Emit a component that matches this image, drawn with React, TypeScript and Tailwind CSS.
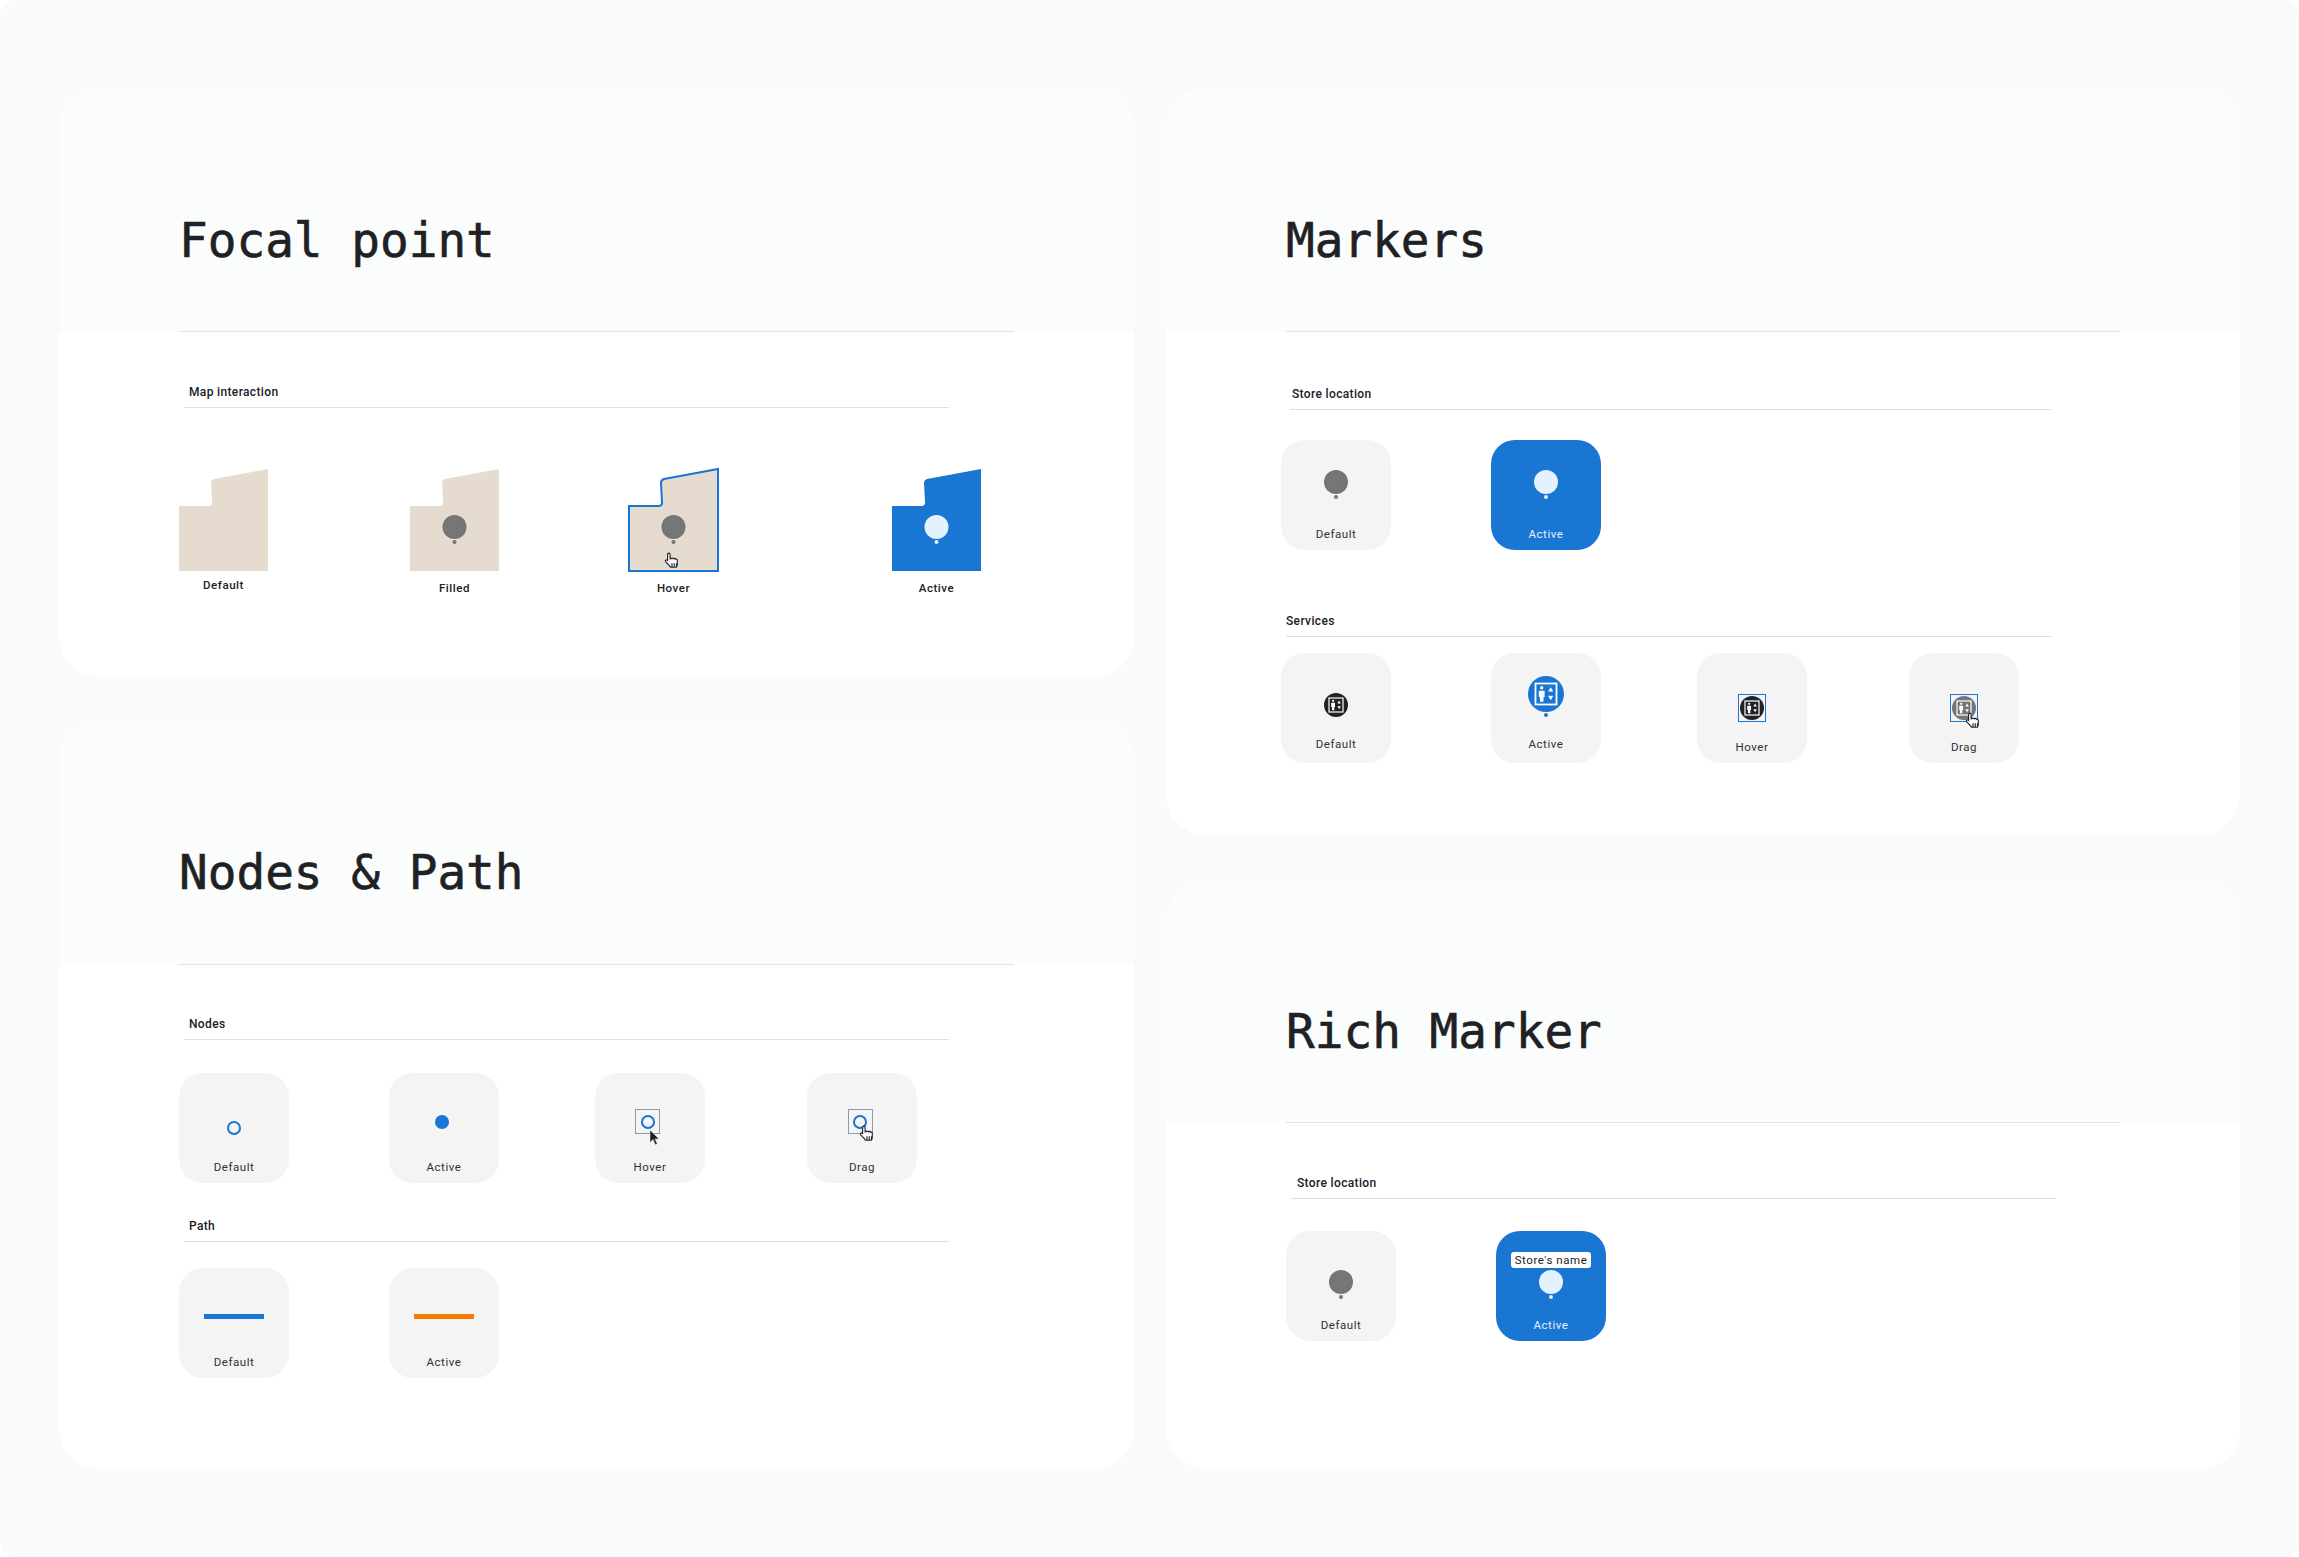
import React from 'react';

const BLUE = '#1976d2';

const specks = [
  [8, 6], [12, 5], [16, 6], [6, 10], [10, 9], [14, 9], [18, 10], [5, 14], [9, 13], [13, 13], [17, 14], [8, 17], [12, 17], [16, 18], [11, 20],
];

const Marker = ({ active = false }: { active?: boolean }) => {
  const fill = active ? '#e3f2fd' : '#757575';
  return (
    <svg width="24" height="30" viewBox="0 0 24 30" className="block">
      <circle cx="12" cy="12" r="12" fill={fill} />
      <circle cx="12" cy="27" r="2" fill={fill} />
      {!active && specks.map(([x, y]) => <circle key={`${x}-${y}`} cx={x} cy={y} r="0.35" fill="#bdbdbd" />)}
    </svg>
  );
};

const Elevator = ({ fill, dot = false, size = 24 }: { fill: string; dot?: boolean; size?: number }) => (
  <svg width={size} height={dot ? size + 8 : size} viewBox={dot ? '0 0 36 44' : '0 0 36 36'} className="block">
    <circle cx="18" cy="18" r="18" fill={fill} />
    <rect x="7.5" y="7.5" width="21" height="21" fill="none" stroke="white" strokeWidth="1.8" />
    <circle cx="13.7" cy="11.8" r="1.7" fill="white" />
    <path d="M10.8 14.8h5.8v6.2h-1.1v4.8h-3.6v-4.8h-1.1z" fill="white" />
    <path d="M22.7 11.2l2.6 4.4h-5.2zM20.1 19.8h5.2l-2.6 4.4z" fill="white" />
    {dot && <circle cx="18" cy="39" r="2" fill={fill} />}
  </svg>
);

const HandCursor = ({ size = 18 }: { size?: number }) => (
  <svg width={size} height={size} viewBox="0 0 16 16" className="block overflow-visible">
    <path
      d="M5.2 1c.7 0 1.1.5 1.1 1.2v3.9l.9-.1c.2-.5.6-.7 1-.6.4 0 .7.2.9.6.3-.3.7-.4 1.1-.3.4.1.6.3.8.7.4-.2.8-.2 1.2.1.4.3.5.7.5 1.2v3c0 1.1-.3 2-.8 2.8H6.7c-.4-.7-1-1.3-1.9-2.3L2.4 8.7c-.4-.5-.4-1 0-1.4.4-.4 1-.4 1.5 0l.2.2V2.2c0-.7.4-1.2 1.1-1.2z"
      fill="white"
      stroke="#202124"
      strokeWidth="1"
    />
    <path d="M8 10v3.4M10 10v3.4M12 10v3.4" stroke="#202124" strokeWidth="1" />
  </svg>
);

const ArrowCursor = () => (
  <svg width="12" height="17" viewBox="0 0 12 17" className="block">
    <path d="M1 0v12.5l3-3 2.3 5.2 2-.9L6 9h4z" fill="#202124" stroke="#e8e8e8" strokeWidth="0.5" />
  </svg>
);

const Ring = () => <div className="w-[14px] h-[14px] rounded-full border-[2.5px] border-[#1976d2]" />;

const Card = ({ title, headerHeight, titlePad, height, children }: { title: string; headerHeight: string; titlePad: string; height: string; children: React.ReactNode }) => (
  <div className={`bg-white rounded-[40px] overflow-hidden ${height}`}>
    <div className={`bg-[#fbfdfc] px-[120px] ${headerHeight}`}>
      <div className={`h-full w-[835px] border-b border-[#dfe1e3] ${titlePad}`}>
        <h1 className="font-['DejaVu_Sans_Mono',monospace] text-[47.7px] leading-[56px] text-[#202124] [-webkit-text-stroke:0.6px_#202124]">{title}</h1>
      </div>
    </div>
    {children}
  </div>
);

const SectionTitle = ({ label, className }: { label: string; className: string }) => (
  <div className={`w-[765px] border-b-[1.5px] border-[#e0e0e0] pb-[7px] font-['Roboto',sans-serif] text-[12px] leading-[16px] font-medium tracking-[0.35px] text-[#202124] ${className}`}>
    {label}
  </div>
);

const Tile = ({ label, top, bottom = 'mb-[9px]', active = false, className = '', children }: { label: string; top: string; bottom?: string; active?: boolean; className?: string; children: React.ReactNode }) => (
  <div className={`w-[110px] h-[110px] shrink-0 rounded-[24px] flex flex-col items-center ${active ? 'bg-[#1976d2]' : 'bg-[#f4f4f4]'} ${top} ${className}`}>
    {children}
    <div className={`mt-auto font-['Roboto',sans-serif] text-[11.5px] leading-[14px] tracking-[0.55px] ${active ? 'text-[#e3f2fd]' : 'text-[#303134]'} ${bottom}`}>{label}</div>
  </div>
);

const MapShape = ({ fill, outline = false, marker, activeMarker = false, label, labelGap = 'mt-[10px]', hand = false, className = '' }: { fill: string; outline?: boolean; marker?: boolean; activeMarker?: boolean; label: string; labelGap?: string; hand?: boolean; className?: string }) => (
  <div className={`w-[89px] shrink-0 flex flex-col items-center ${className}`}>
    <div className="relative w-[89px] h-[102px]">
      <svg width="89" height="102" viewBox="0 0 89 102" className="block overflow-visible">
        <path
          d="M0 37H29.5Q33.5 37 33 33L32 14Q32 11 35 10L89 0V102H0Z"
          fill={fill}
          stroke={outline ? BLUE : 'none'}
          strokeWidth={outline ? 2 : 0}
        />
        {marker && (
          <g transform="translate(32.5 46)">
            <circle cx="12" cy="12" r="12" fill={activeMarker ? '#e3f2fd' : '#757575'} />
            <circle cx="12" cy="27" r="2" fill={activeMarker ? '#e3f2fd' : '#757575'} />
            {!activeMarker && specks.map(([x, y]) => <circle key={`${x}-${y}`} cx={x} cy={y} r="0.35" fill="#bdbdbd" />)}
          </g>
        )}
      </svg>
      {hand && (
        <div className="absolute left-[34px] top-[83px]">
          <HandCursor size={18} />
        </div>
      )}
    </div>
    <div className={`font-['Roboto',sans-serif] text-[11.5px] leading-[14px] font-medium tracking-[0.55px] text-[#202124] ${labelGap}`}>{label}</div>
  </div>
);

const App = () => {
  return (
    <div className="bg-white w-[2299px] h-[1557px] overflow-hidden">
      <div className="bg-[#fafafa] w-full h-full rounded-[16px] pl-[59px] pt-[88px] flex gap-[32px]">
        {/* Left column */}
        <div className="w-[1075px] flex flex-col gap-[43px]">
          <Card title="Focal point" headerHeight="h-[244px]" titlePad="pt-[125px]" height="h-[589px]">
            <SectionTitle label="Map interaction" className="ml-[125px] mt-[52px] pl-[5px]" />
            <div className="flex items-start ml-[120px] mt-[61px]">
              <MapShape fill="#e5dccf" label="Default" labelGap="mt-[7px]" />
              <MapShape fill="#e5dccf" marker label="Filled" className="ml-[142px]" />
              <MapShape fill="#e5dccf" marker outline hand label="Hover" className="ml-[130px]" />
              <MapShape fill={BLUE} marker activeMarker label="Active" className="ml-[174px]" />
            </div>
          </Card>

          <Card title="Nodes & Path" headerHeight="h-[245px]" titlePad="pt-[125px]" height="h-[749px]">
            <SectionTitle label="Nodes" className="ml-[125px] mt-[51px] pl-[5px]" />
            <div className="flex ml-[120px] mt-[33px]">
              <Tile label="Default" top="pt-[48px]">
                <Ring />
              </Tile>
              <Tile label="Active" top="pt-[42px]" className="ml-[100px]">
                <div className="w-[14px] h-[14px] rounded-full bg-[#1976d2] -ml-[4px]" />
              </Tile>
              <Tile label="Hover" top="pt-[36px]" className="ml-[96px]">
                <div className="relative w-[25px] h-[25px] -ml-[5px] border-[1.5px] border-[#8c9db2] flex items-center justify-center">
                  <Ring />
                  <div className="absolute left-[13px] top-[20px]">
                    <ArrowCursor />
                  </div>
                </div>
              </Tile>
              <Tile label="Drag" top="pt-[36px]" className="ml-[102px]">
                <div className="relative w-[25px] h-[25px] -ml-[4px] border-[1.5px] border-[#8c9db2] flex items-center justify-center">
                  <Ring />
                  <div className="absolute left-[9px] top-[15px]">
                    <HandCursor />
                  </div>
                </div>
              </Tile>
            </div>
            <SectionTitle label="Path" className="ml-[125px] mt-[35px] pl-[5px]" />
            <div className="flex ml-[120px] mt-[26px]">
              <Tile label="Default" top="pt-[46px]">
                <div className="w-[60px] h-[5px] bg-[#1976d2]" />
              </Tile>
              <Tile label="Active" top="pt-[46px]" className="ml-[100px]">
                <div className="w-[60px] h-[5px] bg-[#f57c00]" />
              </Tile>
            </div>
          </Card>
        </div>

        {/* Right column */}
        <div className="w-[1074px] flex flex-col gap-[46px]">
          <Card title="Markers" headerHeight="h-[244px]" titlePad="pt-[125px]" height="h-[747px]">
            <SectionTitle label="Store location" className="ml-[124px] mt-[54px] !w-[761px] pl-[2px]" />
            <div className="flex ml-[115px] mt-[30px]">
              <Tile label="Default" top="pt-[30px]">
                <Marker />
              </Tile>
              <Tile label="Active" top="pt-[30px]" active className="ml-[100px]">
                <Marker active />
              </Tile>
            </div>
            <SectionTitle label="Services" className="ml-[120px] mt-[63px]" />
            <div className="flex ml-[115px] mt-[16px]">
              <Tile label="Default" top="pt-[40px]" bottom="mb-[12px]">
                <Elevator fill="#202124" />
              </Tile>
              <Tile label="Active" top="pt-[23px]" bottom="mb-[12px]" className="ml-[100px]">
                <Elevator fill={BLUE} dot size={36} />
              </Tile>
              <Tile label="Hover" top="pt-[41px]" className="ml-[96px]">
                <div className="w-[28px] h-[28px] border border-[#1976d2] flex items-center justify-center">
                  <Elevator fill="#202124" />
                </div>
              </Tile>
              <Tile label="Drag" top="pt-[41px]" className="ml-[102px]">
                <div className="relative w-[28px] h-[28px] border border-[#1976d2] flex items-center justify-center">
                  <Elevator fill="#757575" />
                  <div className="absolute left-[13px] top-[17px]">
                    <HandCursor />
                  </div>
                </div>
              </Tile>
            </div>
          </Card>

          <Card title="Rich Marker" headerHeight="h-[242px]" titlePad="pt-[123px]" height="h-[588px]">
            <SectionTitle label="Store location" className="ml-[125px] mt-[52px] pl-[6px]" />
            <div className="flex ml-[120px] mt-[32px]">
              <Tile label="Default" top="pt-[39px]">
                <Marker />
              </Tile>
              <Tile label="Active" top="pt-[21px]" active className="ml-[100px]">
                <div className="w-[80px] h-[16px] rounded-[3px] bg-white text-center font-['Roboto',sans-serif] text-[11.5px] leading-[16px] tracking-[0.55px] whitespace-nowrap text-[#202124]">Store's name</div>
                <div className="mt-[2px]">
                  <Marker active />
                </div>
              </Tile>
            </div>
          </Card>
        </div>
      </div>
    </div>
  );
};

export default App;
